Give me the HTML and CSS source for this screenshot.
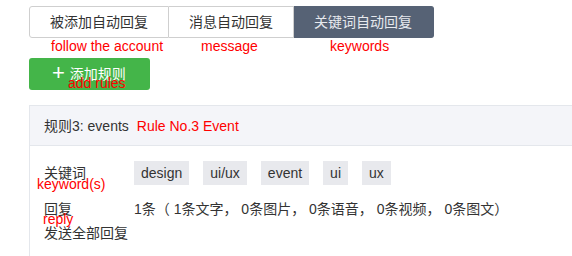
FILE: index.html
```html
<!DOCTYPE html>
<html>
<head>
<meta charset="utf-8">
<link rel="stylesheet" href="styles.css">
</head>
<body>
<div class="page">
  <div class="tabs">
    <div class="tab">被添加自动回复<span class="note note-tab1">follow the account</span></div>
    <div class="tab">消息自动回复<span class="note note-tab2">message</span></div>
    <div class="tab active">关键词自动回复<span class="note note-tab3">keywords</span></div>
  </div>
  <div class="add-row">
    <button class="add-btn"><span class="plus">+</span>添加规则<span class="note note-add">add rules</span></button>
  </div>
  <div class="card">
    <div class="card-head">
      <span class="rule-title">规则3: events</span>
      <span class="rule-note">Rule No.3 Event</span>
    </div>
    <div class="card-body">
      <div class="row">
        <div class="label">关键词<span class="note note-kw">keyword(s)</span></div>
        <div class="tags">
          <span class="tag">design</span>
          <span class="tag">ui/ux</span>
          <span class="tag">event</span>
          <span class="tag">ui</span>
          <span class="tag">ux</span>
        </div>
      </div>
      <div class="row">
        <div class="label">回复<span class="note note-reply">reply</span><br>发送全部回复</div>
        <div class="value">1条（ 1条文字， 0条图片， 0条语音， 0条视频， 0条图文）</div>
      </div>
    </div>
  </div>
</div>
</body>
</html>
```
FILE: styles.css
```css
html, body {
  margin: 0;
  padding: 0;
  background: #fff;
}
body {
  font-family: "Liberation Sans", "Noto Sans CJK SC", sans-serif;
  font-size: 14px;
  color: #333;
  height: 256px;
  overflow: hidden;
}
.page {
  padding: 6px 0 0 29px;
}
.tabs {
  display: flex;
  height: 32px;
}
.tab {
  position: relative;
  box-sizing: border-box;
  height: 32px;
  line-height: 30px;
  padding: 0 20px;
  border: 1px solid #cfcfcf;
  border-left: none;
  color: #333;
  white-space: nowrap;
}
.tab:first-child {
  border-left: 1px solid #cfcfcf;
  border-radius: 3px 0 0 3px;
}
.tab.active {
  background: #566275;
  border-color: #566275;
  color: #e6e9ee;
  border-radius: 0 3px 3px 0;
  padding: 0 21px 0 20px;
}
.note {
  position: absolute;
  color: #ff0000;
  font-family: "Liberation Sans", sans-serif;
  font-size: 14px;
  line-height: 16px;
  white-space: nowrap;
}
.note-tab1 { left: 21px; top: 31px; }
.note-tab2 { left: 32px; top: 31px; }
.note-tab3 { left: 36px; top: 31px; }
.add-row {
  margin-top: 20px;
}
.add-btn {
  position: relative;
  box-sizing: border-box;
  width: 121px;
  height: 32px;
  border: none;
  border-radius: 3px;
  background: #44b549;
  color: #fff;
  font-family: "Liberation Sans", "Noto Sans CJK SC", sans-serif;
  font-size: 14px;
  padding: 0 0 0 23px;
  text-align: left;
  display: flex;
  align-items: center;
  line-height: 20px;
  margin: 0;
}
.plus {
  font-size: 22px;
  font-weight: 300;
  margin-right: 5px;
  line-height: 20px;
  position: relative;
  top: -1px;
}
.note-add { left: 39px; top: 17px; }
.card {
  margin-top: 15px;
  border: 1px solid #e4e7ec;
  border-right: none;
  border-bottom: none;
  height: 150px;
}
.card-head {
  height: 40px;
  box-sizing: border-box;
  background: #f4f5f9;
  border-bottom: 1px solid #e4e7ec;
  display: flex;
  align-items: center;
  padding-left: 14px;
  line-height: 20px;
}
.rule-title {
  color: #333;
}
.rule-note {
  color: #ff0000;
  margin-left: 8px;
}
.card-body {
  padding: 15px 0 0 14px;
  display: flex;
  flex-direction: column;
  gap: 12px;
}
.row {
  display: flex;
  align-items: flex-start;
}
.label {
  position: relative;
  width: 90px;
  flex: none;
  line-height: 24px;
  color: #333;
}
.note-kw { left: -7px; top: 15px; }
.note-reply { left: -1px; top: 14px; }
.tags {
  display: flex;
  gap: 14px;
}
.tag {
  height: 24px;
  line-height: 24px;
  padding: 0 7px;
  background: #e8e9ed;
  color: #333;
}
.value {
  line-height: 24px;
  color: #333;
}
```
